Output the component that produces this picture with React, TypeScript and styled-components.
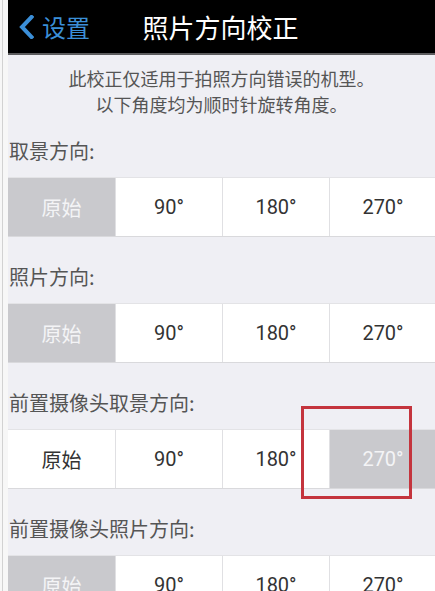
import React from "react";
import styled, { createGlobalStyle } from "styled-components";

const GlobalStyle = createGlobalStyle`
  html, body {
    margin: 0;
    padding: 0;
    background: #f7f7f7;
  }
  body {
    font-family: Roboto, "Noto Sans CJK SC", sans-serif;
    overflow: hidden;
  }
`;

const Frame = styled.div`
  display: flex;
  height: 591px;
  overflow: hidden;
  padding-left: 2px;
  box-sizing: border-box;
`;

const EdgeLine = styled.div`
  width: 1px;
  background: #d2d2d2;
  margin-right: 5px;
  flex-shrink: 0;
`;

const Screen = styled.div`
  position: relative;
  flex: 1;
  background: #efeff4;
  min-width: 0;
`;

const TopBar = styled.header`
  height: 53px;
  background: #000;
  border-bottom: 2px solid #5c5c5e;
  display: grid;
  grid-template-columns: 1fr auto 1fr;
  align-items: center;
`;

const BackButton = styled.div`
  display: flex;
  align-items: center;
  gap: 8px;
  padding-left: 11px;
  color: #3b8fd8;
  font-family: "Noto Sans CJK SC", sans-serif;
  font-size: 24px;
  line-height: 1;
`;

const Title = styled.h1`
  margin: 0;
  color: #fff;
  font-family: "Noto Sans CJK SC", sans-serif;
  font-size: 26px;
  font-weight: 400;
  padding-right: 2px;
`;

const Intro = styled.div`
  padding: 10px 0 6px;
  text-align: center;
  color: #555;
  font-family: "Noto Sans CJK SC", sans-serif;
  font-size: 18px;
  line-height: 26px;
`;

const Section = styled.section`
  & + & {
    margin-top: 12px;
  }
`;

const Label = styled.div`
  height: 54px;
  display: flex;
  align-items: center;
  padding-left: 1px;
  color: #555;
  font-family: "Noto Sans CJK SC", sans-serif;
  font-size: 20px;
`;

const Row = styled.div`
  display: grid;
  grid-template-columns: repeat(4, 1fr);
  height: 60px;
  border-top: 1px solid #e3e3e6;
  border-bottom: 1px solid #d9d9dc;
  box-sizing: border-box;
  width: 428px;
`;

const Cell = styled.div<{ $active: boolean }>`
  display: flex;
  align-items: center;
  justify-content: center;
  background: ${(p) => (p.$active ? "#c9c9cd" : "#fff")};
  color: ${(p) => (p.$active ? "#f4f4f6" : "#333")};
  font-size: 20px;
  & + & {
    border-left: 1px solid ${(p) => (p.$active ? "#c9c9cd" : "#e0e0e3")};
  }
`;

const Marker = styled.div`
  position: absolute;
  left: 293px;
  top: 406px;
  width: 111px;
  height: 93px;
  border: 3px solid #c4343d;
  box-sizing: border-box;
  pointer-events: none;
`;

const options = ["原始", "90°", "180°", "270°"];

const sections = [
  { title: "取景方向:", active: 0 },
  { title: "照片方向:", active: 0 },
  { title: "前置摄像头取景方向:", active: 3 },
  { title: "前置摄像头照片方向:", active: 0 },
];

function Chevron() {
  return (
    <svg width="15" height="24" viewBox="0 0 15 24">
      <path
        d="M12.5 2 L3 12 L12.5 22"
        fill="none"
        stroke="#3b8fd8"
        strokeWidth="4"
        strokeLinecap="square"
      />
    </svg>
  );
}

export default function App() {
  return (
    <>
      <GlobalStyle />
      <Frame>
        <EdgeLine />
        <Screen>
          <TopBar>
            <BackButton>
              <Chevron />
              <span>设置</span>
            </BackButton>
            <Title>照片方向校正</Title>
            <div />
          </TopBar>

          <Intro>
            此校正仅适用于拍照方向错误的机型。
            <br />
            以下角度均为顺时针旋转角度。
          </Intro>

          {sections.map((s) => (
            <Section key={s.title}>
              <Label>{s.title}</Label>
              <Row>
                {options.map((o, i) => (
                  <Cell key={o} $active={i === s.active}>
                    {o}
                  </Cell>
                ))}
              </Row>
            </Section>
          ))}

          <Marker />
        </Screen>
      </Frame>
    </>
  );
}
